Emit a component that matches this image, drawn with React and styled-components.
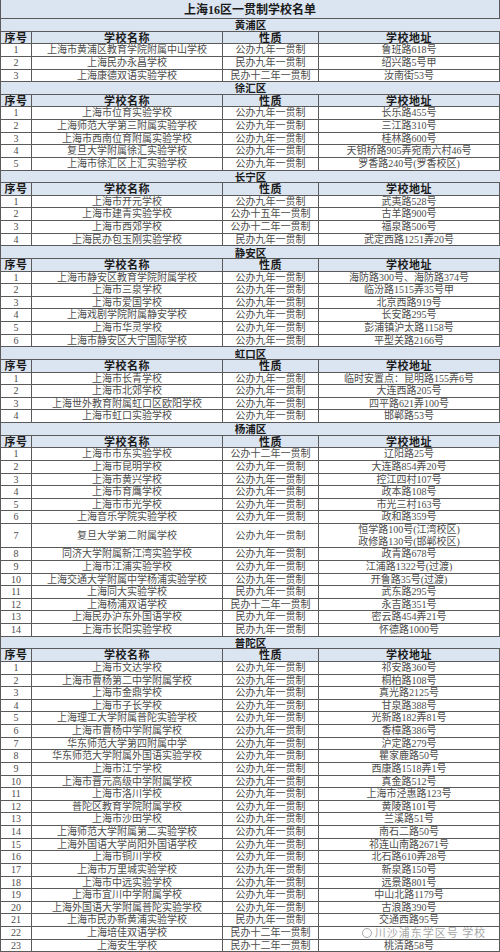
import React from "react";
import styled, { createGlobalStyle, css } from "styled-components";

const Global = createGlobalStyle`
  html, body { margin: 0; padding: 0; background: #fff; }
  body { font-family: "Liberation Serif", "Noto Sans CJK SC", serif; }
`;

const WM = "__watermark__";

const districts = [
  {
    name: "黄浦区",
    rows: [
      ["上海市黄浦区教育学院附属中山学校", "公办九年一贯制", "鲁班路618号"],
      ["上海民办永昌学校", "民办九年一贯制", "绍兴路5号甲"],
      ["上海康德双语实验学校", "民办十二年一贯制", "汝南街53号"],
    ],
  },
  {
    name: "徐汇区",
    rows: [
      ["上海市位育实验学校", "公办九年一贯制", "长乐路455号"],
      ["上海师范大学第三附属实验学校", "公办九年一贯制", "三江路310号"],
      ["上海市西南位育附属实验学校", "公办九年一贯制", "桂林路600号"],
      ["复旦大学附属徐汇实验学校", "公办九年一贯制", "天钥桥路905弄宛南六村46号"],
      ["上海市徐汇区上汇实验学校", "公办九年一贯制", "罗香路240号(罗香校区)"],
    ],
  },
  {
    name: "长宁区",
    rows: [
      ["上海市开元学校", "公办九年一贯制", "武夷路528号"],
      ["上海市建青实验学校", "公办十五年一贯制", "古羊路900号"],
      ["上海市西郊学校", "公办十二年一贯制", "福泉路506号"],
      ["上海民办包玉刚实验学校", "民办九年一贯制", "武定西路1251弄20号"],
    ],
  },
  {
    name: "静安区",
    rows: [
      ["上海市静安区教育学院附属学校", "公办九年一贯制", "海防路300号、海防路374号"],
      ["上海市三泉学校", "公办九年一贯制", "临汾路1515弄35号甲"],
      ["上海市爱国学校", "公办九年一贯制", "北京西路919号"],
      ["上海戏剧学院附属静安学校", "公办九年一贯制", "长安路295号"],
      ["上海市华灵学校", "公办九年一贯制", "彭浦镇沪太路1158号"],
      ["上海市静安区大宁国际学校", "公办九年一贯制", "平型关路2166号"],
    ],
  },
  {
    name: "虹口区",
    rows: [
      ["上海市长青学校", "公办九年一贯制", "临时安置点：昆明路155弄6号"],
      ["上海市北郊学校", "公办九年一贯制", "大连西路205号"],
      ["上海世外教育附属虹口区欧阳学校", "公办九年一贯制", "四平路621弄100号"],
      ["上海市虹口实验学校", "公办九年一贯制", "邯郸路53号"],
    ],
  },
  {
    name: "杨浦区",
    rows: [
      ["上海市市东实验学校", "公办十二年一贯制", "辽阳路25号"],
      ["上海市昆明学校", "公办九年一贯制", "大连路854弄20号"],
      ["上海市黄兴学校", "公办九年一贯制", "控江四村107号"],
      ["上海市育鹰学校", "公办九年一贯制", "政本路108号"],
      ["上海市市光学校", "公办九年一贯制", "市光三村163号"],
      ["上海音乐学院实验学校", "公办九年一贯制", "政和路359号"],
      ["复旦大学第二附属学校", "公办九年一贯制", ["恒学路100号(江湾校区)", "政修路130号(邯郸校区)"]],
      ["同济大学附属新江湾实验学校", "公办九年一贯制", "政青路678号"],
      ["上海市江浦实验学校", "公办九年一贯制", "江浦路1322号(过渡)"],
      ["上海交通大学附属中学杨浦实验学校", "公办九年一贯制", "开鲁路35号(过渡)"],
      ["上海同大实验学校", "民办九年一贯制", "武东路295号"],
      ["上海杨浦双语学校", "民办十二年一贯制", "永吉路351号"],
      ["上海民办沪东外国语学校", "民办九年一贯制", "密云路454弄21号"],
      ["上海市长阳实验学校", "民办九年一贯制", "怀德路1000号"],
    ],
  },
  {
    name: "普陀区",
    rows: [
      ["上海市文达学校", "公办九年一贯制", "祁安路360号"],
      ["上海市曹杨第二中学附属学校", "公办九年一贯制", "桐柏路108号"],
      ["上海市金鼎学校", "公办九年一贯制", "真光路2125号"],
      ["上海市子长学校", "公办九年一贯制", "甘泉路388号"],
      ["上海理工大学附属普陀实验学校", "公办九年一贯制", "光新路182弄81号"],
      ["上海市曹杨中学附属学校", "公办九年一贯制", "香樟路386号"],
      ["华东师范大学第四附属中学", "公办九年一贯制", "沪定路279号"],
      ["华东师范大学附属外国语实验学校", "公办九年一贯制", "瞿家鹿路50号"],
      ["上海市江宁学校", "公办九年一贯制", "西康路1518弄1号"],
      ["上海市晋元高级中学附属学校", "公办九年一贯制", "真金路512号"],
      ["上海市洛川学校", "公办九年一贯制", "上海市泾惠路123号"],
      ["普陀区教育学院附属学校", "公办九年一贯制", "黄陵路101号"],
      ["上海市沙田学校", "公办九年一贯制", "兰溪路51号"],
      ["上海师范大学附属第二实验学校", "公办九年一贯制", "南石二路50号"],
      ["上海外国语大学尚阳外国语学校", "公办九年一贯制", "祁连山南路2671号"],
      ["上海市铜川学校", "公办九年一贯制", "北石路610弄28号"],
      ["上海市万里城实验学校", "公办九年一贯制", "新泉路150号"],
      ["上海市中远实验学校", "公办九年一贯制", "远景路801号"],
      ["上海市宜川中学附属学校", "公办九年一贯制", "中山北路1179号"],
      ["上海外国语大学附属普陀实验学校", "公办九年一贯制", "古浪路390号"],
      ["上海市民办新黄浦实验学校", "民办九年一贯制", "交通西路95号"],
      ["上海培佳双语学校", "民办十二年一贯制", WM],
      ["上海安生学校", "民办十二年一贯制", "桃清路58号"],
    ],
  },
];

const Sheet = styled.div`
  width: 500px;
  height: 952px;
  display: flex;
  flex-direction: column;
  box-sizing: border-box;
  border-left: 1px solid #5a5a5a;
  overflow: hidden;
`;

const Title = styled.div`
  flex: 0 0 17px;
  box-sizing: border-box;
  display: flex;
  align-items: center;
  justify-content: center;
  background: #dbe5f1;
  border-bottom: 1px solid #5a5a5a;
  border-right: 1px solid #5a5a5a;
  font-size: 12px;
  font-weight: bold;
  color: #1a1a1a;
`;

const Band = styled.div`
  flex: 1 1 0;
  min-height: 0;
  box-sizing: border-box;
  display: flex;
  align-items: center;
  justify-content: center;
  background: #dbe5f1;
  border-bottom: 1px solid #5a5a5a;
  font-size: 10.5px;
  font-weight: bold;
  color: #1a1a1a;
`;

const Row = styled.div`
  flex: ${(p) => p.$span || 1} 1 0;
  min-height: 0;
  box-sizing: border-box;
  display: grid;
  grid-template-columns: 31px 191px 96px 1fr;
  border-bottom: 1px solid #5a5a5a;
  ${(p) =>
    p.$head &&
    css`
      background: #dbe5f1;
    `}
`;

const Cell = styled.div`
  display: flex;
  flex-direction: column;
  align-items: center;
  justify-content: center;
  border-right: 1px solid #5a5a5a;
  white-space: nowrap;
  line-height: 1.15;
  font-size: ${(p) => (p.$head ? "11px" : "10px")};
  font-weight: ${(p) => (p.$head ? "bold" : "normal")};
  color: ${(p) => (p.$head ? "#1a1a1a" : "#4d4d4d")};
  letter-spacing: ${(p) => (p.$head ? "0.5px" : "0")};
`;

const Watermark = styled.div`
  display: flex;
  align-items: center;
  gap: 3px;
  margin-left: 30px;
  font-family: "Noto Sans CJK SC", sans-serif;
  font-size: 11px;
  letter-spacing: 1px;
  line-height: 1;
  color: #a8a8a8;
`;

const Ring = styled.span`
  width: 10px;
  height: 10px;
  border: 1.5px solid #a8a8a8;
  border-radius: 50%;
  box-sizing: border-box;
`;

function HeaderRow() {
  return (
    <Row $head>
      <Cell $head>序号</Cell>
      <Cell $head>学校名称</Cell>
      <Cell $head>性质</Cell>
      <Cell $head>学校地址</Cell>
    </Row>
  );
}

function Address({ value }) {
  if (value === WM) {
    return (
      <Watermark>
        <Ring />
        <span>川沙浦东学区号 学校</span>
      </Watermark>
    );
  }
  if (Array.isArray(value)) return value.map((a) => <span key={a}>{a}</span>);
  return value;
}

export default function App() {
  return (
    <>
      <Global />
      <Sheet>
        <Title>上海16区一贯制学校名单</Title>
        {districts.map((d) => (
          <React.Fragment key={d.name}>
            <Band>{d.name}</Band>
            <HeaderRow />
            {d.rows.map(([school, kind, addr], i) => (
              <Row key={school} $span={Array.isArray(addr) ? 2 : 1}>
                <Cell>{i + 1}</Cell>
                <Cell>{school}</Cell>
                <Cell>{kind}</Cell>
                <Cell>
                  <Address value={addr} />
                </Cell>
              </Row>
            ))}
          </React.Fragment>
        ))}
      </Sheet>
    </>
  );
}
